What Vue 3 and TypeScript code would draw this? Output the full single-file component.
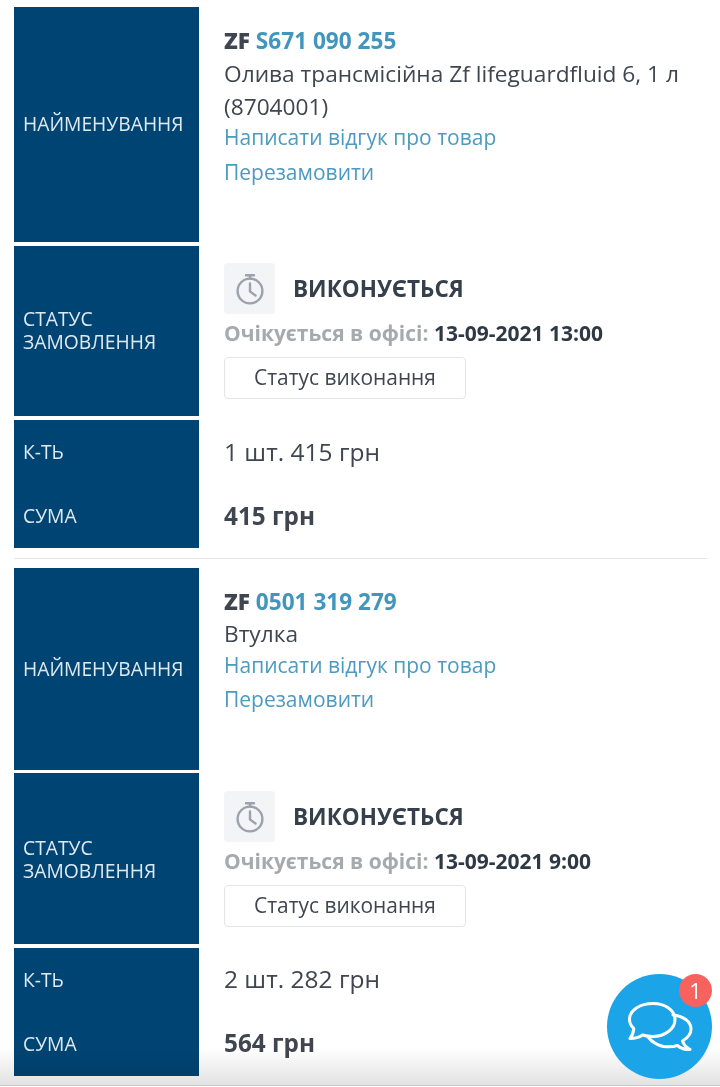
<template>
  <div class="orders">
    <section v-for="(order, i) in orders" :key="i" class="order">
      <div class="row row--name" :style="{ minHeight: order.nameHeight + 'px' }">
        <div class="label">НАЙМЕНУВАННЯ</div>
        <div class="value value--name">
          <div class="code"><b>ZF</b> <a>{{ order.code }}</a></div>
          <div class="title">{{ order.title }}</div>
          <a class="link link--review">Написати відгук про товар</a>
          <a class="link">Перезамовити</a>
        </div>
      </div>
      <div class="row row--status">
        <div class="label">СТАТУС<br />ЗАМОВЛЕННЯ</div>
        <div class="value value--status">
          <div class="state">
            <span class="state__icon">
              <svg width="30" height="32" viewBox="0 0 30 32" fill="none" stroke="#9aa3ad" stroke-width="2.4" stroke-linecap="round">
                <circle cx="15" cy="18" r="12.4" />
                <path d="M15 10.500V18.500L20.500 22.500" />
                <path d="M11 2.200H19M15 2.200V5.500" />
              </svg>
            </span>
            <span class="state__text">ВИКОНУЄТЬСЯ</span>
          </div>
          <div class="expected"><span>Очікується в офісі:</span> {{ order.date }}</div>
          <button type="button" class="status-btn">Статус виконання</button>
        </div>
      </div>
      <div class="row row--totals">
        <div class="label label--totals">
          <span>К-ТЬ</span>
          <span>СУМА</span>
        </div>
        <div class="value value--totals">
          <span>{{ order.qty }}</span>
          <b>{{ order.sum }}</b>
        </div>
      </div>
    </section>

    <div class="fade" />
    <div class="chat">
      <svg width="68" height="54" viewBox="0 0 68 54" fill="none" stroke="#fff" stroke-width="3" stroke-linejoin="round" stroke-linecap="round">
        <path d="M27 3.500C14 3.500 3.500 10 3.500 19.500C3.500 23 5 26 7.800 28.500C7.500 32 6 36 4 38.500C8.500 38.500 13 37.500 16.500 35C19.500 36 23 36.500 27 36.500C39 36.500 49 29 49 19.500C49 10 39 3.500 27 3.500Z" />
        <path d="M47 15C57 16 65 21.500 65 29C65 34 61.500 38 56.500 41C57.500 44 60.500 47.500 64 49.500C59 50 55 48.500 51.500 45.500C47 47 42 47 37.500 46.500C31 45 26 42 22.500 37.500" />
      </svg>
      <span class="chat__badge">1</span>
    </div>
  </div>
</template>

<script setup lang="ts">
interface Order {
  code: string;
  title: string;
  date: string;
  qty: string;
  sum: string;
  nameHeight: number;
}

const orders: Order[] = [
  {
    code: 'S671 090 255',
    title: 'Олива трансмісійна Zf lifeguardfluid 6, 1 л (8704001)',
    date: '13-09-2021 13:00',
    qty: '1 шт. 415 грн',
    sum: '415 грн',
    nameHeight: 235,
  },
  {
    code: '0501 319 279',
    title: 'Втулка',
    date: '13-09-2021 9:00',
    qty: '2 шт. 282 грн',
    sum: '564 грн',
    nameHeight: 202,
  },
];
</script>

<style>
html,
body {
  margin: 0;
  background: #fff;
  overflow: hidden;
}
</style>

<style scoped>
.orders {
  position: relative;
  height: 1087px;
  overflow: hidden;
  padding: 7px 13px 0 14px;
  box-sizing: border-box;
  font-family: 'Open Sans', 'Noto Sans', sans-serif;
  color: #3f4650;
}

.order {
  padding-bottom: 10px;
  margin-bottom: 9px;
  border-bottom: 1px solid #e4e7ea;
}

.order:last-of-type {
  border-bottom: 0;
}

.row {
  display: grid;
  grid-template-columns: 185px 1fr;
  margin-bottom: 4px;
}

.order:last-of-type .row--name {
  margin-bottom: 3px;
}

.row--totals {
  margin-bottom: 0;
}

.label {
  display: flex;
  align-items: center;
  padding-left: 9px;
  background: #004473;
  color: #dfe9f0;
  font-size: 19.3px;
  line-height: 23px;
}

.row--name .label {
  padding-bottom: 2px;
}

.label--totals {
  flex-direction: column;
  align-items: flex-start;
  padding-top: 20px;
  height: 128px;
  box-sizing: border-box;
}

.label--totals span:last-child {
  margin-top: 41px;
}

.row--status .label {
  display: block;
  padding-top: 61px;
  box-sizing: border-box;
}

.order:last-of-type .row--status .label {
  padding-top: 63px;
}

.value {
  padding-left: 25px;
}

.value--name {
  padding-top: 17px;
  font-size: 22.7px;
  line-height: 34px;
}

.code {
  font-size: 22.6px;
  font-weight: 700;
}

.code a {
  color: #4296bd;
}

.title {
  margin-top: -1px;
  line-height: 33px;
}

.order:last-of-type .title {
  margin-top: -2px;
}

.link {
  display: block;
  color: #4c9ac0;
  font-size: 21px;
  line-height: 30px;
}

.link--review {
  margin-top: -1px;
  margin-bottom: 5px;
}

.order:last-of-type .link--review {
  margin-top: 0;
  margin-bottom: 4px;
}

.value--status {
  height: 170px;
  padding-top: 17px;
  box-sizing: border-box;
}

.order:last-of-type .value--status {
  height: 171px;
  padding-top: 18px;
}

.state {
  display: flex;
  align-items: center;
  gap: 18px;
}

.state__icon {
  display: flex;
  align-items: center;
  justify-content: center;
  width: 51px;
  height: 51px;
  border-radius: 4px;
  background: #f3f4f6;
}

.state__text {
  font-size: 22.5px;
  font-weight: 700;
  color: #36404c;
}

.expected {
  margin-top: 4px;
  font-size: 21px;
  line-height: 30px;
  font-weight: 700;
  color: #2f3946;
}

.expected span {
  color: #a5aaaf;
}

.status-btn {
  display: block;
  margin-top: 9px;
  width: 242px;
  height: 42px;
  padding: 0 0 2px;
  border: 1px solid #e3e5e8;
  border-radius: 4px;
  background: #fff;
  color: #3f4650;
  font-family: inherit;
  font-size: 20.9px;
}

.value--totals {
  display: flex;
  flex-direction: column;
  align-items: flex-start;
  padding-top: 15px;
  font-size: 24.5px;
  line-height: 34px;
}

.order:last-of-type .value--totals {
  padding-top: 14px;
}

.value--totals b {
  margin-top: 30px;
  font-size: 24.3px;
}

.fade {
  position: absolute;
  left: 0;
  right: 0;
  bottom: 0;
  height: 38px;
  background: linear-gradient(#fff, #e2e2e2);
  mix-blend-mode: multiply;
  border-bottom: 1px solid #c9c9c9;
  box-shadow: 0 1px 0 #fff;
  margin-bottom: 1px;
  box-sizing: border-box;
}

.chat {
  position: absolute;
  left: 607px;
  top: 974px;
  width: 105px;
  height: 105px;
  border-radius: 50%;
  background: #1ba5e8;
  display: flex;
  align-items: center;
  justify-content: center;
}

.chat__badge {
  position: absolute;
  top: 0;
  right: 0;
  width: 33px;
  height: 33px;
  border-radius: 50%;
  background: #f8625e;
  color: #fff;
  font-size: 22px;
  line-height: 32px;
  text-align: center;
}
</style>
